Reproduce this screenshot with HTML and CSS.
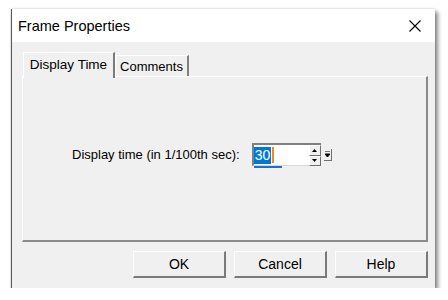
FILE: index.html
```html
<!DOCTYPE html>
<html>
<head>
<meta charset="utf-8">
<link rel="stylesheet" href="styles.css">
</head>
<body>
<div class="window">
  <div class="titlebar">
    <span class="title">Frame Properties</span>
    <span class="close">
      <svg width="12" height="12" viewBox="0 0 12 12"><path d="M0.5 0.5 L11.5 11.5 M11.5 0.5 L0.5 11.5" stroke="#000" stroke-width="1.1" fill="none"/></svg>
    </span>
  </div>
  <div class="content">
    <div class="tabs">
      <div class="tab active">Display Time</div>
      <div class="tab comments">Comments</div>
    </div>
    <div class="panel">
      <div class="field-row">
        <label class="label">Display time (in 1/100th sec):</label>
        <div class="spinner">
          <div class="input"><span class="sel">30</span><span class="caret"></span><span class="underline"></span></div>
          <div class="spin">
            <div class="spin-btn"><svg width="5" height="3" viewBox="0 0 5 3"><path d="M2.5 0 L5 3 L0 3 Z" fill="#000"/></svg></div>
            <div class="spin-btn"><svg width="5" height="3" viewBox="0 0 5 3"><path d="M0 0 L5 0 L2.5 3 Z" fill="#000"/></svg></div>
          </div>
          <div class="drop"><svg width="5" height="6" viewBox="0 0 5 6"><path d="M0 0 H5 M0 3 L5 3 L2.5 6 Z" stroke="#000" stroke-width="1" fill="#000"/></svg></div>
        </div>
      </div>
    </div>
    <div class="buttons">
      <button class="btn">OK</button>
      <button class="btn">Cancel</button>
      <button class="btn">Help</button>
    </div>
  </div>
</div>
</body>
</html>
```
FILE: styles.css
```css
* { box-sizing: border-box; }
body {
  margin: 0;
  background: #fff;
  font-family: "Liberation Sans", Arial, sans-serif;
}
.window {
  margin: 9px 0 0 11px;
  width: 424px;
  height: 279px;
  border-left: 1px solid #5a5a5a;
  box-shadow: 3px 3px 4px rgba(0,0,0,0.45), 0 0 2px rgba(0,0,0,0.25);
  background: #f0f0f0;
  display: flex;
  flex-direction: column;
}
.titlebar {
  height: 33px;
  background: #fff;
  display: flex;
  align-items: center;
  justify-content: space-between;
  padding: 0 14px 0 6px;
}
.title {
  font-size: 14.5px;
  color: #000;
  padding-top: 1px;
}
.close {
  display: flex;
  width: 12px;
  height: 12px;
}
.content {
  flex: 1;
  padding: 10px 7px 0 10px;
  display: flex;
  flex-direction: column;
}
.tabs {
  display: flex;
  align-items: flex-end;
  height: 24px;
  position: relative;
  z-index: 1;
  padding-left: 1px;
}
.tab {
  height: 21px;
  font-size: 13px;
  color: #000;
  padding-top: 3px;
  text-align: center;
  border-top: 1px solid #fff;
  border-left: 1px solid #fff;
  border-right: 2px solid #808080;
  background: #f0f0f0;
  line-height: 16px;
  white-space: nowrap;
}
.tab.active {
  width: 92px;
  height: 26px;
  padding-top: 4px;
  margin-bottom: -2px;
  font-size: 13.5px;
  border-right: 2px solid #7a7a7a;
}
.tab.comments {
  width: 74px;
}
.panel {
  width: 406px;
  height: 166px;
  border-top: 1px solid #fff;
  border-left: 1px solid #fff;
  border-right: 2px solid #8a8a8a;
  border-bottom: 2px solid #8a8a8a;
  padding: 66px 0 0 49px;
}
.field-row {
  display: flex;
  align-items: center;
  gap: 12px;
}
.label {
  font-size: 13px;
  color: #000;
}
.spinner {
  display: flex;
  align-items: stretch;
  height: 23px;
}
.input {
  position: relative;
  width: 57px;
  background: #fff;
  border-top: 2px solid #808080;
  border-left: 2px solid #808080;
  border-bottom: 1px solid #d8d8d8;
  padding: 1px 0 0 0;
}
.sel {
  display: inline-block;
  background: #0078d7;
  color: #fff;
  font-size: 14px;
  line-height: 17px;
  padding: 0 1px;
}
.caret {
  position: absolute;
  left: 18px;
  top: 2px;
  width: 2px;
  height: 16px;
  background: #f08a24;
}
.underline {
  position: absolute;
  left: 0;
  bottom: -3px;
  width: 28px;
  height: 2px;
  background: #1a6fd0;
}
.spin {
  width: 12px;
  display: flex;
  flex-direction: column;
  border-top: 2px solid #808080;
  background: #fff;
}
.spin-btn {
  flex: 1;
  display: flex;
  align-items: center;
  justify-content: center;
  background: #f0f0f0;
  border-top: 1px solid #fff;
  border-left: 1px solid #fff;
  border-right: 1px solid #707070;
  border-bottom: 1px solid #707070;
}
.drop {
  margin-left: 3px;
  width: 8px;
  display: flex;
  align-items: center;
  justify-content: center;
  align-self: center;
  height: 12px;
  background: #f0f0f0;
  border-right: 1px solid #707070;
  border-bottom: 1px solid #707070;
}
.buttons {
  display: flex;
  justify-content: flex-end;
  gap: 8px;
  margin-top: 9px;
}
.btn {
  width: 93px;
  height: 27px;
  font-family: "Liberation Sans", Arial, sans-serif;
  font-size: 14px;
  color: #000;
  background: #f0f0f0;
  border-top: 1px solid #fff;
  border-left: 1px solid #fff;
  border-right: 2px solid #7a7a7a;
  border-bottom: 2px solid #7a7a7a;
  padding: 0;
  margin: 0;
}
```
